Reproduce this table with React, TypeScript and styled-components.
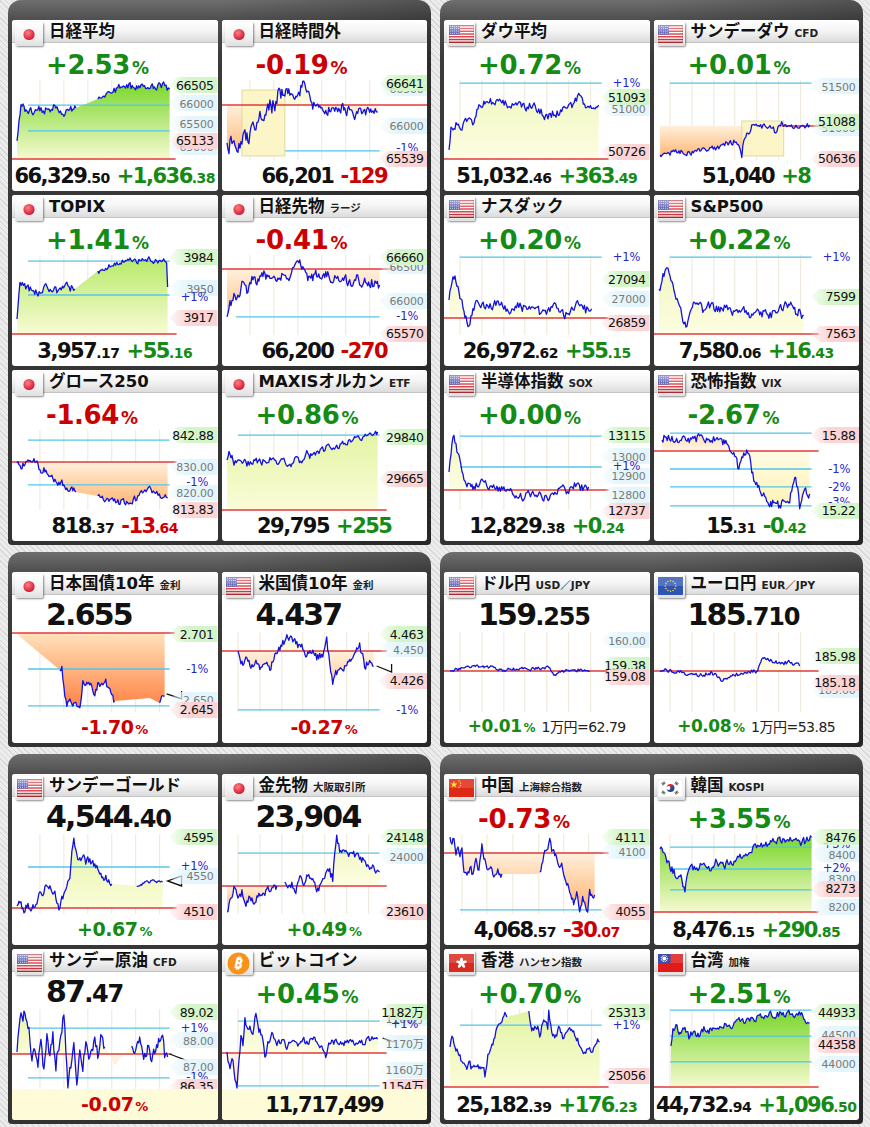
import React, { useId, useMemo } from 'react';
import styled, { createGlobalStyle } from 'styled-components';

type Col = 'g' | 'r' | 'k';
type FlagKind = 'jp' | 'us' | 'eu' | 'cn' | 'kr' | 'hk' | 'tw' | 'btc';
type Seg = { k: number[][]; n: number; h?: boolean };
type Lb = [number, string, 'a' | 'b' | 'h' | 'l'];

interface ChartSpec {
  p: number;
  px?: [number, number];
  segs: Seg[];
  cy?: number[];
  cx?: [number, number];
  lb: Lb[];
  box?: number[];
  mk?: string;
  up?: string[];
  dn?: string[];
  grid?: number[];
}

interface CardSpec {
  flag: FlagKind;
  title: string;
  sub?: string;
  pct?: [string, Col];
  lvl?: [string, string?];
  pair?: [string, string, Col];
  fpct?: [string, Col];
  note?: string;
  fpx?: string;
  yel?: boolean;
  ch: ChartSpec;
}

const COLORS: Record<Col, string> = { g: '#158a15', r: '#cc0000', k: '#111' };

const G3 = ['#f6fad0', '#76d626'];
const G2 = ['#f8fbd4', '#b4e963'];
const G1 = ['#fdfde2', '#eef6bc'];
const GY = ['#fbfcd8', '#e2f4a2'];
const O1 = ['#fff6e6', '#ffd7a4'];
const O2 = ['#fff0dc', '#ffb068'];
const O3 = ['#ffe2bc', '#ff7c3c'];
const Y1 = ['#fffbe6', '#fdf2b0'];

const JP = [28, 52, 76, 100, 124, 148];
const US = [16, 38, 60, 81, 103, 125, 147];
const CN = [18, 43, 69, 95, 120, 145];

const GlobalStyle = createGlobalStyle`
  html, body { margin: 0; padding: 0; }
  body {
    background-color: #e6e6e6;
    background-image: repeating-linear-gradient(45deg, #d8d8d8 0 1px, #ececec 1px 4px);
    font-family: 'DejaVu Sans', 'Noto Sans CJK JP', sans-serif;
  }
`;

const Page = styled.div`
  width: 870px;
  min-height: 1127px;
  box-sizing: border-box;
  padding: 0 0 0 8px;
  display: grid;
  grid-template-columns: 423px 423px;
  column-gap: 9px;
  row-gap: 7px;
  align-content: start;
`;

const Panel = styled.section`
  padding: 20px 4px 4px;
  border-radius: 13px 13px 4px 4px;
  background:
    linear-gradient(90deg, rgba(0, 0, 0, 0) 50%, rgba(0, 0, 0, 0.25) 100%),
    linear-gradient(180deg, #6e6e6e 0, #4e4e4e 20px, #3a3a3a 60px, #333 100%);
  display: grid;
  grid-template-columns: 1fr 1fr;
  gap: 4px;
  align-content: start;
`;

const Card = styled.article`
  height: 171px;
  background: #fff;
  border-radius: 3px;
  display: flex;
  flex-direction: column;
  overflow: hidden;
`;

const Header = styled.header`
  height: 23px;
  flex-shrink: 0;
  box-sizing: border-box;
  display: flex;
  align-items: flex-start;
  background: linear-gradient(180deg, #ffffff 0%, #f6f6f6 45%, #dcdcdc 100%);
  border-bottom: 1px solid #c4c4c4;
`;

const FlagTab = styled.div`
  position: relative;
  z-index: 1;
  width: 28px;
  height: 24px;
  margin: 2px 0 0 3px;
  flex-shrink: 0;
  display: flex;
  align-items: center;
  justify-content: center;
  border-radius: 2px;
  background: linear-gradient(180deg, #ffffff 0%, #f2f2f2 60%, #e0e0e0 100%);
  box-shadow: 1px 1px 2px rgba(0, 0, 0, 0.45);
`;

const Title = styled.h2`
  margin: 0 0 0 6px;
  font-size: 16.5px;
  line-height: 23px;
  font-weight: bold;
  color: #111;
  white-space: nowrap;
  font-family: 'DejaVu Sans', 'Noto Sans CJK JP', sans-serif;
`;

const Sub = styled.span`
  margin-left: 5px;
  font-size: 10.5px;
  font-weight: bold;
  color: #222;
`;

const Headline = styled.div`
  height: 37px;
  flex-shrink: 0;
  box-sizing: border-box;
  display: flex;
  align-items: flex-end;
  padding: 0 0 2px 34px;
`;

const LineText = styled.div`
  line-height: 1;
  white-space: nowrap;
`;

const Val = styled.span<{ $s: number; $c: string; $ls?: number }>`
  font-size: ${(p) => p.$s}px;
  color: ${(p) => p.$c};
  letter-spacing: ${(p) => p.$ls ?? 0}px;
  font-weight: bold;
`;

const PctSign = styled.span<{ $s: number; $c: string }>`
  font-size: ${(p) => p.$s}px;
  color: ${(p) => p.$c};
  font-weight: bold;
  margin-left: 2px;
`;

const Note = styled.span`
  font-size: 14px;
  letter-spacing: -0.5px;
  color: #222;
  margin-left: 6px;
`;

const Footer = styled.div<{ $yel?: boolean }>`
  flex: 1;
  box-sizing: border-box;
  padding-top: 6px;
  display: flex;
  justify-content: center;
  align-items: baseline;
  gap: 7px;
  line-height: 1;
  white-space: nowrap;
  background: ${(p) => (p.$yel ? '#fefbd8' : 'transparent')};
`;

const ChartSvg = styled.svg`
  display: block;
  flex-shrink: 0;
  overflow: visible;
  font-family: 'DejaVu Sans', 'Noto Sans CJK JP', sans-serif;
`;

function rng(seed: number) {
  let a = seed >>> 0;
  return () => {
    a = (a + 0x6d2b79f5) >>> 0;
    let t = a;
    t = Math.imul(t ^ (t >>> 15), t | 1);
    t ^= t + Math.imul(t ^ (t >>> 7), t | 61);
    return ((t ^ (t >>> 14)) >>> 0) / 4294967296;
  };
}

// keypoints are joined with a jittered line, hidden segments only shape the fill
function build(segs: Seg[], seed: number) {
  const r = rng(seed);
  const all: number[][] = [];
  const lines: string[] = [];
  for (const s of segs) {
    const pts: number[][] = [];
    if (s.h) {
      s.k.forEach((p) => pts.push([p[0], p[1]]));
    } else {
      let dev = 0;
      for (let i = 0; i < s.k.length - 1; i++) {
        const [x0, y0] = s.k[i];
        const [x1, y1] = s.k[i + 1];
        const steps = Math.max(1, Math.round((x1 - x0) / 1.1));
        for (let j = 0; j < steps; j++) {
          const t = j / steps;
          dev = dev * 0.3 + (r() - 0.5) * 2.6 * s.n;
          const y = Math.min(79, Math.max(1, y0 + (y1 - y0) * t + (i === 0 && j === 0 ? 0 : dev)));
          pts.push([x0 + (x1 - x0) * t, y]);
        }
      }
      const last = s.k[s.k.length - 1];
      pts.push([last[0], last[1]]);
      lines.push(pts.map((p) => `${p[0].toFixed(1)},${p[1].toFixed(1)}`).join(' '));
    }
    all.push(...pts);
  }
  return { all, lines };
}

const TAG: Record<string, string> = { h: '#d4f5ca', l: '#fbd5d5', a: '#e4f6fb' };

function Chart({ spec, seed }: { spec: ChartSpec; seed: number }) {
  const uid = useId().replace(/[^a-zA-Z0-9]/g, '');
  const { all, lines } = useMemo(() => build(spec.segs, seed), [spec, seed]);
  const p = spec.p;
  const fx0 = all[0][0];
  const fx1 = all[all.length - 1][0];
  const area =
    `M${fx0},${p} ` + all.map((q) => `L${q[0].toFixed(1)},${q[1].toFixed(1)}`).join(' ') + ` L${fx1},${p} Z`;
  const up = spec.up ?? G1;
  const dn = spec.dn ?? O1;
  const [px0, px1] = spec.px ?? [0, 165];
  const [cx0, cx1] = spec.cx ?? [16, 158];
  const order = { a: 0, b: 1, h: 2, l: 2 };
  const labels = [...spec.lb].sort((a, b) => order[a[2]] - order[b[2]]);

  return (
    <ChartSvg viewBox="0 0 206 80" width="100%" height="80">
      <defs>
        <linearGradient id={`u${uid}`} gradientUnits="userSpaceOnUse" x1="0" y1={p} x2="0" y2="0">
          <stop offset="0" stopColor={up[0]} />
          <stop offset="1" stopColor={up[1]} />
        </linearGradient>
        <linearGradient id={`d${uid}`} gradientUnits="userSpaceOnUse" x1="0" y1={p} x2="0" y2="80">
          <stop offset="0" stopColor={dn[0]} />
          <stop offset="1" stopColor={dn[1]} />
        </linearGradient>
        <clipPath id={`cu${uid}`}>
          <rect x="0" y="-10" width="206" height={p + 10} />
        </clipPath>
        <clipPath id={`cd${uid}`}>
          <rect x="0" y={p} width="206" height={95 - p} />
        </clipPath>
        {(['h', 'l', 'a'] as const).map((t) => (
          <linearGradient key={t} id={`t${t}${uid}`} gradientUnits="userSpaceOnUse" x1="157" y1="0" x2="176" y2="0">
            <stop offset="0" stopColor={TAG[t]} stopOpacity="0.15" />
            <stop offset="1" stopColor={TAG[t]} stopOpacity="1" />
          </linearGradient>
        ))}
      </defs>
      {(spec.grid ?? JP).map((x) => (
        <line key={x} x1={x} y1="0" x2={x} y2="80" stroke="#eee7d6" strokeWidth="1" />
      ))}
      <path d={area} fill={`url(#u${uid})`} clipPath={`url(#cu${uid})`} />
      <path d={area} fill={`url(#d${uid})`} clipPath={`url(#cd${uid})`} />
      {(spec.cy ?? []).map((y) => (
        <line key={y} x1={cx0} y1={y} x2={cx1} y2={y} stroke="#52c6e6" strokeWidth="1.3" />
      ))}
      {spec.box && (
        <rect
          x={spec.box[0]}
          y={spec.box[1]}
          width={spec.box[2] - spec.box[0]}
          height={spec.box[3] - spec.box[1]}
          fill="#fcf4c2"
          fillOpacity="0.92"
          stroke="#e2d99a"
          strokeWidth="1"
        />
      )}
      <line x1={px0} y1={p} x2={px1} y2={p} stroke="#e23a3a" strokeWidth="1.5" />
      {lines.map((l, i) => (
        <polyline key={i} points={l} fill="none" stroke="#1212dc" strokeWidth="1.3" strokeLinejoin="round" />
      ))}
      {spec.mk && <path d={spec.mk} fill="none" stroke="#111" strokeWidth="1.3" />}
      {labels.map(([y, t, k], i) =>
        k === 'b' ? (
          <text key={i} x="197" y={y + 4} textAnchor="end" fontSize="11.5" fill="#2626cc">
            {t}
          </text>
        ) : (
          <g key={i}>
            <path d={`M157,${y} L166,${y - 8} L206,${y - 8} L206,${y + 8} L166,${y + 8} Z`} fill={`url(#t${k}${uid})`} />
            <text
              x="202"
              y={y + 4.5}
              textAnchor="end"
              fontSize={k === 'a' ? 11 : 12.5}
              fill={k === 'a' ? '#7a7a7a' : '#111'}
              letterSpacing={k === 'a' ? -0.2 : -0.4}
            >
              {t}
            </text>
          </g>
        )
      )}
    </ChartSvg>
  );
}

function Flag({ f }: { f: FlagKind }) {
  switch (f) {
    case 'jp':
      return (
        <svg width="24" height="17" viewBox="0 0 24 17">
          <defs>
            <radialGradient id="jpdot" cx="0.4" cy="0.35" r="0.7">
              <stop offset="0" stopColor="#ff8080" />
              <stop offset="1" stopColor="#cc1030" />
            </radialGradient>
          </defs>
          <circle cx="12" cy="8.5" r="5.6" fill="url(#jpdot)" />
        </svg>
      );
    case 'us':
      return (
        <svg width="25" height="18" viewBox="0 0 25 18">
          <defs>
            <linearGradient id="gloss" x1="0" y1="0" x2="0" y2="1">
              <stop offset="0" stopColor="#fff" stopOpacity="0.5" />
              <stop offset="0.5" stopColor="#fff" stopOpacity="0.05" />
              <stop offset="1" stopColor="#000" stopOpacity="0.12" />
            </linearGradient>
          </defs>
          <rect width="25" height="18" fill="#fff" />
          {Array.from({ length: 7 }).map((_, i) => (
            <rect key={i} x="0" y={(i * 2 * 18) / 13} width="25" height={18 / 13} fill="#d8333a" />
          ))}
          <rect width="11" height="9.7" fill="#5a5fb4" />
          {Array.from({ length: 20 }).map((_, i) => (
            <circle key={i} cx={1.3 + (i % 5) * 2.1} cy={1.3 + Math.floor(i / 5) * 2.3} r="0.5" fill="#e8e8ff" />
          ))}
          <rect width="25" height="18" fill="url(#gloss)" />
          <rect x="0.25" y="0.25" width="24.5" height="17.5" fill="none" stroke="rgba(0,0,0,0.25)" strokeWidth="0.5" />
        </svg>
      );
    case 'eu':
      return (
        <svg width="25" height="18" viewBox="0 0 25 18">
          <rect width="25" height="18" fill="#2f55b4" />
          {Array.from({ length: 12 }).map((_, i) => (
            <circle
              key={i}
              cx={12.5 + 5.2 * Math.cos((i * Math.PI) / 6)}
              cy={9 + 5.2 * Math.sin((i * Math.PI) / 6)}
              r="0.8"
              fill="#f2d23a"
            />
          ))}
          <rect width="25" height="9" fill="#fff" fillOpacity="0.18" />
        </svg>
      );
    case 'cn':
      return (
        <svg width="25" height="18" viewBox="0 0 25 18">
          <rect width="25" height="18" fill="#de2a14" />
          <polygon points="5,1.8 5.9,4.4 8.6,4.4 6.4,6 7.2,8.6 5,7 2.8,8.6 3.6,6 1.4,4.4 4.1,4.4" fill="#ffde00" />
          {[
            [10, 2],
            [11.5, 4],
            [11.5, 6.6],
            [10, 8.4],
          ].map(([x, y], i) => (
            <circle key={i} cx={x} cy={y} r="0.75" fill="#ffde00" />
          ))}
          <rect width="25" height="9" fill="#fff" fillOpacity="0.15" />
        </svg>
      );
    case 'kr':
      return (
        <svg width="25" height="18" viewBox="0 0 25 18">
          <rect width="25" height="18" fill="#fff" stroke="#ccc" strokeWidth="0.5" />
          <path d="M8.6 9 A3.9 3.9 0 0 1 16.4 9 A1.95 1.95 0 0 1 12.5 9 A1.95 1.95 0 0 0 8.6 9 Z" fill="#d6303c" />
          <path d="M8.6 9 A3.9 3.9 0 0 0 16.4 9 A1.95 1.95 0 0 0 12.5 9 A1.95 1.95 0 0 1 8.6 9 Z" fill="#1e4da0" />
          <g stroke="#222" strokeWidth="0.8">
            <path d="M3.5 5 L6 2.5 M4.2 5.7 L6.7 3.2 M4.9 6.4 L7.4 3.9" />
            <path d="M18 2.5 L20.5 5 M17.3 3.2 L19.8 5.7 M16.6 3.9 L19.1 6.4" />
            <path d="M3.5 13 L6 15.5 M4.2 12.3 L6.7 14.8 M4.9 11.6 L7.4 14.1" />
            <path d="M18 15.5 L20.5 13 M17.3 14.8 L19.8 12.3 M16.6 14.1 L19.1 11.6" />
          </g>
        </svg>
      );
    case 'hk':
      return (
        <svg width="25" height="18" viewBox="0 0 25 18">
          <rect width="25" height="18" fill="#d92a20" />
          {Array.from({ length: 5 }).map((_, i) => (
            <ellipse key={i} cx="12.5" cy="6.2" rx="1.5" ry="2.8" fill="#fff" transform={`rotate(${i * 72} 12.5 9)`} />
          ))}
          <rect width="25" height="9" fill="#fff" fillOpacity="0.15" />
        </svg>
      );
    case 'tw':
      return (
        <svg width="25" height="18" viewBox="0 0 25 18">
          <rect width="25" height="18" fill="#e01b1b" />
          <rect width="12.5" height="9" fill="#1b2f9c" />
          <circle cx="6.25" cy="4.5" r="3" fill="none" stroke="#fff" strokeWidth="1.1" strokeDasharray="0.9 0.7" />
          <circle cx="6.25" cy="4.5" r="1.9" fill="#fff" />
          <rect width="25" height="9" fill="#fff" fillOpacity="0.15" />
        </svg>
      );
    case 'btc':
      return (
        <svg width="23" height="23" viewBox="0 0 23 23">
          <circle cx="11.5" cy="11.5" r="11" fill="#f7931a" />
          <text
            x="11.5"
            y="16.5"
            textAnchor="middle"
            fontSize="15"
            fontWeight="bold"
            fill="#fff"
            fontFamily="'DejaVu Sans', 'Noto Sans', sans-serif"
            transform="rotate(12 11.5 11.5)"
          >
            ₿
          </text>
        </svg>
      );
  }
}

function Price({ v, c, s, ss, ls }: { v: string; c: string; s: number; ss: number; ls: number }) {
  const i = v.indexOf('.');
  if (i < 0)
    return (
      <Val $s={s} $c={c} $ls={ls}>
        {v}
      </Val>
    );
  return (
    <span>
      <Val $s={s} $c={c} $ls={ls}>
        {v.slice(0, i)}
      </Val>
      <Val $s={ss} $c={c} $ls={-0.5}>
        {v.slice(i)}
      </Val>
    </span>
  );
}

function MarketCard({ d, seed }: { d: CardSpec; seed: number }) {
  return (
    <Card>
      <Header>
        <FlagTab>
          <Flag f={d.flag} />
        </FlagTab>
        <Title>
          {d.title}
          {d.sub && <Sub>{d.sub}</Sub>}
        </Title>
      </Header>
      <Headline>
        <LineText>
          {d.pct && (
            <>
              <Val $s={26} $c={COLORS[d.pct[1]]} $ls={-0.4}>
                {d.pct[0]}
              </Val>
              <PctSign $s={17} $c={COLORS[d.pct[1]]}>
                %
              </PctSign>
            </>
          )}
          {d.lvl && (
            <>
              <Val $s={30} $c={COLORS.k} $ls={-1.8}>
                {d.lvl[0]}
              </Val>
              {d.lvl[1] && (
                <Val $s={24} $c={COLORS.k} $ls={-1.2}>
                  {d.lvl[1]}
                </Val>
              )}
            </>
          )}
        </LineText>
      </Headline>
      <Chart spec={d.ch} seed={seed} />
      <Footer $yel={d.yel}>
        {d.pair && (
          <>
            <Price v={d.pair[0]} c={COLORS.k} s={21} ss={14} ls={-1.5} />
            <Price v={d.pair[1]} c={COLORS[d.pair[2]]} s={21} ss={14} ls={-1.5} />
          </>
        )}
        {d.fpct && (
          <LineText>
            <Val $s={d.note ? 17 : 19} $c={COLORS[d.fpct[1]]} $ls={-0.5}>
              {d.fpct[0]}
            </Val>
            <PctSign $s={d.note ? 12 : 13} $c={COLORS[d.fpct[1]]}>
              %
            </PctSign>
            {d.note && <Note>{d.note}</Note>}
          </LineText>
        )}
        {d.fpx && (
          <Val $s={21} $c={COLORS.k} $ls={-1.5}>
            {d.fpx}
          </Val>
        )}
      </Footer>
    </Card>
  );
}

const panels: CardSpec[][] = [
  [
    {
      flag: 'jp',
      title: '日経平均',
      pct: ['+2.53', 'g'],
      pair: ['66,329.50', '+1,636.38', 'g'],
      ch: {
        p: 79,
        px: [0, 164],
        up: G3,
        segs: [
          { k: [[5, 61], [7, 40], [9, 24], [14, 30], [20, 32], [28, 28], [36, 31], [44, 27], [52, 32], [60, 29], [64, 28]], n: 3 },
          { k: [[64, 28], [86, 19]], n: 0, h: true },
          { k: [[86, 19], [92, 17], [100, 13], [106, 8], [115, 6], [125, 7], [135, 6], [145, 7], [152, 5], [158, 9]], n: 2.5 },
        ],
        cy: [25, 51],
        lb: [[23, '66000', 'a'], [44, '65500', 'a'], [67, '65000', 'a'], [5, '66505', 'h'], [61, '65133', 'l']],
      },
    },
    {
      flag: 'jp',
      title: '日経時間外',
      pct: ['-0.19', 'r'],
      pair: ['66,201', '-129', 'r'],
      ch: {
        p: 25,
        px: [0, 206],
        dn: O2,
        segs: [
          { k: [[5, 63], [10, 66], [15, 70], [20, 62], [25, 55], [30, 48], [35, 42], [40, 35], [45, 28], [50, 24], [55, 20], [60, 14], [65, 8]], n: 7 },
          { k: [[65, 8], [70, 15], [75, 20], [78, 12], [81, 3], [85, 15], [90, 24], [95, 28], [100, 22], [105, 30], [110, 26], [115, 32], [120, 28], [125, 34], [130, 30], [135, 36], [140, 32], [145, 30], [150, 33], [156, 32]], n: 4 },
        ],
        box: [20, 10, 63, 76],
        cy: [71],
        cx: [63, 158],
        lb: [[8, '66500', 'a'], [46, '66000', 'a'], [68, '-1%', 'b'], [3, '66641', 'h'], [79, '65539', 'l']],
      },
    },
    {
      flag: 'jp',
      title: 'TOPIX',
      pct: ['+1.41', 'g'],
      pair: ['3,957.17', '+55.16', 'g'],
      ch: {
        p: 79,
        up: G2,
        segs: [
          { k: [[5, 64], [8, 30], [15, 34], [25, 38], [35, 33], [45, 36], [55, 32], [63, 34]], n: 3 },
          { k: [[63, 34], [86, 16]], n: 0, h: true },
          { k: [[86, 16], [95, 12], [105, 8], [115, 5], [125, 6], [135, 4], [145, 6], [152, 4], [155, 8], [156, 32]], n: 2 },
        ],
        cy: [6, 40],
        lb: [[33, '3950', 'a'], [42, '+1%', 'b'], [2, '3984', 'h'], [63, '3917', 'l']],
      },
    },
    {
      flag: 'jp',
      title: '日経先物',
      sub: 'ラージ',
      pct: ['-0.41', 'r'],
      pair: ['66,200', '-270', 'r'],
      ch: {
        p: 14,
        px: [0, 206],
        dn: O2,
        segs: [
          { k: [[5, 62], [8, 50], [12, 40], [16, 45], [20, 30], [25, 35], [30, 22], [35, 28], [40, 18], [45, 24], [50, 20], [55, 25], [60, 18], [66, 22], [72, 15], [76, 3], [80, 15], [85, 20], [90, 24], [95, 18], [100, 25], [105, 20], [110, 26], [115, 22], [120, 28], [125, 24], [130, 27], [135, 24], [140, 30], [145, 26], [150, 28], [158, 30]], n: 4 },
        ],
        cy: [62],
        cx: [14, 158],
        lb: [[11, '66500', 'a'], [46, '66000', 'a'], [61, '-1%', 'b'], [2, '66660', 'h'], [79, '65570', 'l']],
      },
    },
    {
      flag: 'jp',
      title: 'グロース250',
      pct: ['-1.64', 'r'],
      pair: ['818.37', '-13.64', 'r'],
      ch: {
        p: 32,
        dn: O2,
        segs: [
          { k: [[5, 33], [10, 36], [15, 30], [20, 34], [25, 30], [28, 42], [32, 38], [36, 48], [40, 44], [45, 55], [50, 52], [55, 60], [60, 58], [64, 62]], n: 2.5 },
          { k: [[64, 62], [86, 66]], n: 0, h: true },
          { k: [[86, 66], [95, 70], [105, 73], [115, 72], [125, 68], [132, 62], [138, 58], [144, 64], [150, 66], [156, 68]], n: 2.5 },
        ],
        cy: [10, 55],
        lb: [[37, '830.00', 'a'], [52, '-1%', 'b'], [63, '820.00', 'a'], [5, '842.88', 'h'], [80, '813.83', 'l']],
      },
    },
    {
      flag: 'jp',
      title: 'MAXISオルカン',
      sub: 'ETF',
      pct: ['+0.86', 'g'],
      pair: ['29,795', '+255', 'g'],
      ch: {
        p: 80,
        up: GY,
        segs: [
          { k: [[5, 30], [8, 22], [12, 32], [18, 28], [25, 34], [32, 30], [40, 33], [48, 28], [55, 32], [62, 30], [68, 35], [74, 30], [80, 32], [85, 24], [90, 26], [96, 22], [102, 20], [108, 16], [115, 18], [122, 12], [128, 10], [134, 8], [140, 10], [146, 5], [152, 8], [156, 2]], n: 2.5 },
        ],
        cy: [5],
        lb: [[7, '29840', 'h'], [49, '29665', 'l']],
      },
    },
  ],
  [
    {
      flag: 'us',
      title: 'ダウ平均',
      pct: ['+0.72', 'g'],
      pair: ['51,032.46', '+363.49', 'g'],
      ch: {
        p: 79,
        grid: US,
        segs: [
          { k: [[5, 70], [7, 50], [12, 45], [18, 48], [24, 40], [30, 42], [33, 30], [38, 25], [43, 18], [50, 22], [58, 20], [66, 26], [72, 20], [80, 28], [88, 25], [95, 30], [103, 38], [110, 33], [118, 32], [126, 28], [135, 17], [142, 24], [148, 25], [155, 25]], n: 3 },
        ],
        cy: [3],
        lb: [[28, '51000', 'a'], [3, '+1%', 'b'], [17, '51093', 'h'], [72, '50726', 'l']],
      },
    },
    {
      flag: 'us',
      title: 'サンデーダウ',
      sub: 'CFD',
      pct: ['+0.01', 'g'],
      pair: ['51,040', '+8', 'g'],
      ch: {
        p: 46,
        px: [128, 206],
        grid: US,
        dn: O2,
        segs: [
          { k: [[6, 75], [15, 73], [25, 72], [35, 73], [45, 71], [55, 70], [65, 67], [72, 64], [80, 62], [86, 66], [88, 76], [90, 60], [95, 52], [100, 43], [108, 48], [115, 45], [122, 52], [128, 42], [133, 47], [140, 47], [148, 47], [156, 45]], n: 2 },
        ],
        box: [88, 41, 130, 76],
        cy: [3],
        lb: [[6, '51500', 'a'], [48, '51000', 'a'], [42, '51088', 'h'], [79, '50636', 'l']],
      },
    },
    {
      flag: 'us',
      title: 'ナスダック',
      pct: ['+0.20', 'g'],
      pair: ['26,972.62', '+55.15', 'g'],
      ch: {
        p: 63,
        grid: US,
        segs: [
          { k: [[5, 45], [8, 28], [11, 22], [15, 40], [20, 55], [25, 70], [28, 60], [32, 45], [38, 50], [45, 55], [52, 48], [60, 52], [68, 58], [75, 50], [82, 55], [90, 52], [98, 60], [105, 55], [112, 52], [120, 60], [128, 55], [135, 48], [142, 55], [148, 54]], n: 3.5 },
        ],
        cy: [2],
        lb: [[44, '27000', 'a'], [2, '+1%', 'b'], [24, '27094', 'h'], [68, '26859', 'l']],
      },
    },
    {
      flag: 'us',
      title: 'S&P500',
      pct: ['+0.22', 'g'],
      pair: ['7,580.06', '+16.43', 'g'],
      ch: {
        p: 79,
        grid: US,
        segs: [
          { k: [[5, 34], [9, 20], [13, 15], [18, 25], [22, 40], [28, 60], [32, 73], [36, 55], [42, 48], [50, 55], [58, 50], [66, 56], [74, 52], [82, 58], [90, 54], [98, 60], [106, 56], [114, 62], [120, 58], [128, 54], [135, 48], [140, 55], [145, 58], [150, 60]], n: 3.5 },
        ],
        cy: [2],
        lb: [[2, '+1%', 'b'], [42, '7599', 'h'], [79, '7563', 'l']],
      },
    },
    {
      flag: 'us',
      title: '半導体指数',
      sub: 'SOX',
      pct: ['+0.00', 'g'],
      pair: ['12,829.38', '+0.24', 'g'],
      ch: {
        p: 60,
        grid: US,
        segs: [
          { k: [[5, 42], [8, 15], [10, 8], [13, 20], [16, 30], [20, 48], [25, 55], [30, 58], [38, 52], [45, 56], [52, 60], [60, 58], [70, 64], [80, 68], [90, 62], [100, 68], [110, 65], [118, 58], [125, 62], [132, 55], [138, 58], [145, 57]], n: 3 },
        ],
        cy: [6, 37],
        lb: [[26, '13000', 'a'], [46, '12900', 'a'], [65, '12800', 'a'], [36, '+1%', 'b'], [5, '13115', 'h'], [81, '12737', 'l']],
      },
    },
    {
      flag: 'us',
      title: '恐怖指数',
      sub: 'VIX',
      pct: ['-2.67', 'g'],
      pair: ['15.31', '-0.42', 'g'],
      ch: {
        p: 21,
        grid: [80],
        up: O1,
        dn: Y1,
        segs: [
          { k: [[8, 10], [12, 6], [18, 9], [25, 11], [32, 8], [40, 10], [48, 7], [55, 10], [62, 9], [68, 12], [71, 11], [74, 18], [78, 23], [82, 26], [85, 40], [88, 30], [91, 25], [93, 17], [96, 30], [100, 50], [104, 57], [108, 63], [112, 66], [116, 75], [120, 72], [125, 76], [130, 72], [135, 75], [138, 60], [141, 45], [144, 60], [146, 77], [149, 68], [151, 60], [154, 66], [156, 64]], n: 3 },
        ],
        cy: [3, 39, 57, 76],
        lb: [[72, '-3%', 'b'], [39, '-1%', 'b'], [57, '-2%', 'b'], [5, '15.88', 'l'], [81, '15.22', 'h']],
      },
    },
  ],
  [
    {
      flag: 'jp',
      title: '日本国債10年',
      sub: '金利',
      lvl: ['2.655'],
      fpct: ['-1.70', 'r'],
      ch: {
        p: 1,
        px: [0, 163],
        dn: O3,
        segs: [
          { k: [[6, 3], [48, 38]], n: 0, h: true },
          { k: [[48, 38], [50, 35], [52, 55], [55, 78], [57, 66], [60, 70], [64, 75], [68, 78], [71, 49], [74, 55], [77, 50], [80, 56], [83, 62], [86, 52], [90, 55], [94, 50], [97, 58], [100, 65], [103, 69]], n: 3 },
          { k: [[103, 69], [138, 66], [148, 71]], n: 0, h: true },
          { k: [[148, 71], [150, 63], [153, 64]], n: 1 },
        ],
        cy: [37, 74],
        lb: [[68, '2.650', 'a'], [37, '-1%', 'b'], [2, '2.701', 'h'], [78, '2.645', 'l']],
        mk: 'M155 62 L170 67 L170 59',
      },
    },
    {
      flag: 'us',
      title: '米国債10年',
      sub: '金利',
      lvl: ['4.437'],
      fpct: ['-0.27', 'r'],
      ch: {
        p: 19,
        dn: O2,
        grid: US,
        segs: [
          { k: [[16, 19], [18, 24], [21, 35], [25, 28], [29, 33], [33, 30], [38, 34], [43, 32], [48, 36], [52, 28], [55, 21], [58, 18], [62, 10], [66, 3], [70, 8], [75, 13], [80, 16], [85, 22], [90, 20], [95, 26], [100, 24], [103, 20], [105, 9], [108, 30], [111, 49], [115, 40], [121, 36], [126, 28], [131, 23], [135, 18], [138, 14], [141, 25], [143, 36], [147, 30], [150, 31], [152, 34]], n: 3 },
        ],
        cy: [78],
        lb: [[17, '4.450', 'a'], [78, '-1%', 'b'], [2, '4.463', 'h'], [49, '4.426', 'l']],
        mk: 'M155 34 L170 40 L170 32',
      },
    },
  ],
  [
    {
      flag: 'us',
      title: 'ドル円',
      sub: 'USD／JPY',
      lvl: ['159', '.255'],
      fpct: ['+0.01', 'g'],
      note: '1万円=62.79',
      ch: {
        p: 39,
        grid: US,
        segs: [
          { k: [[6, 39], [15, 37], [25, 36], [38, 34], [50, 36], [60, 38], [75, 37], [90, 37], [100, 36], [105, 34], [108, 40], [110, 44], [114, 40], [120, 39], [130, 38], [140, 38], [146, 39]], n: 1.2 },
        ],
        lb: [[8, '160.00', 'a'], [33, '159.38', 'h'], [45, '159.08', 'l']],
      },
    },
    {
      flag: 'eu',
      title: 'ユーロ円',
      sub: 'EUR／JPY',
      lvl: ['185', '.710'],
      fpct: ['+0.08', 'g'],
      note: '1万円=53.85',
      ch: {
        p: 39,
        grid: US,
        segs: [
          { k: [[6, 39], [12, 38], [20, 39], [30, 41], [40, 42], [50, 43], [55, 40], [60, 42], [65, 47], [68, 51], [72, 46], [78, 43], [85, 42], [92, 41], [100, 39], [103, 39], [106, 33], [110, 26], [115, 28], [120, 30], [128, 31], [135, 30], [140, 32], [146, 34]], n: 1.5 },
        ],
        lb: [[58, '185.00', 'a'], [24, '185.98', 'h'], [51, '185.18', 'l']],
      },
    },
  ],
  [
    {
      flag: 'us',
      title: 'サンデーゴールド',
      lvl: ['4,544', '.40'],
      fpct: ['+0.67', 'g'],
      ch: {
        p: 74,
        up: GY,
        segs: [
          { k: [[5, 72], [8, 68], [12, 76], [16, 70], [20, 78], [24, 66], [28, 62], [32, 56], [35, 50], [40, 56], [44, 62], [46, 68], [47, 74], [50, 62], [54, 60], [58, 42], [60, 20], [62, 2], [64, 15], [67, 25], [70, 22], [74, 28], [78, 26], [82, 32], [86, 35], [90, 40], [95, 45], [100, 50]], n: 3 },
          { k: [[100, 50], [125, 52]], n: 0, h: true },
          { k: [[125, 52], [130, 50], [135, 48], [140, 47], [145, 48], [151, 48]], n: 1 },
        ],
        cy: [33],
        lb: [[42, '4550', 'a'], [32, '+1%', 'b'], [3, '4595', 'h'], [78, '4510', 'l']],
        mk: 'M170 42 L156 47 L170 52 Z',
      },
    },
    {
      flag: 'jp',
      title: '金先物',
      sub: '大阪取引所',
      lvl: ['23,904'],
      fpct: ['+0.49', 'g'],
      ch: {
        p: 52,
        grid: US,
        dn: O2,
        segs: [
          { k: [[5, 78], [8, 68], [12, 55], [16, 62], [20, 58], [24, 68], [28, 62], [32, 70], [36, 60], [40, 62], [45, 56], [50, 54], [55, 52]], n: 3 },
          { k: [[55, 52], [63, 48]], n: 0, h: true },
          { k: [[63, 48], [66, 55], [70, 50], [74, 58], [78, 45], [82, 50], [86, 40], [90, 48], [94, 52], [97, 57], [100, 50], [104, 42], [108, 38], [111, 45], [113, 20], [115, 2], [118, 15], [122, 20], [126, 18], [130, 22], [134, 20], [138, 24], [142, 26], [146, 30], [150, 34], [154, 36], [158, 38]], n: 3 },
        ],
        cy: [19],
        lb: [[22, '24000', 'a'], [3, '24148', 'h'], [78, '23610', 'l']],
      },
    },
    {
      flag: 'us',
      title: 'サンデー原油',
      sub: 'CFD',
      lvl: ['87', '.47'],
      fpct: ['-0.07', 'r'],
      yel: true,
      ch: {
        p: 45,
        px: [0, 160],
        up: GY,
        segs: [
          { k: [[5, 43], [7, 20], [9, 2], [11, 8], [13, 2], [15, 15], [17, 25], [19, 45], [20, 57], [23, 40], [26, 55], [29, 35], [32, 62], [35, 30], [38, 50], [41, 28], [44, 58], [47, 35], [50, 20], [52, 5], [54, 40], [56, 78], [59, 55], [62, 35], [65, 70], [68, 45], [71, 60], [74, 30], [77, 50], [80, 40], [83, 28], [86, 45], [89, 30], [93, 38]], n: 5 },
          { k: [[93, 38], [103, 56], [118, 38]], n: 0, h: true },
          { k: [[120, 37], [124, 45], [128, 33], [132, 48], [136, 40], [140, 52], [144, 38], [148, 30], [151, 25], [153, 48], [156, 48]], n: 4 },
        ],
        cy: [19, 69],
        lb: [[31, '88.00', 'a'], [58, '87.00', 'a'], [68, '-1%', 'b'], [19, '+1%', 'b'], [3, '89.02', 'h'], [78, '86.35', 'l']],
        mk: 'M158 45 L176 52',
      },
    },
    {
      flag: 'btc',
      title: 'ビットコイン',
      pct: ['+0.45', 'g'],
      fpx: '11,717,499',
      yel: true,
      ch: {
        p: 44,
        grid: US,
        segs: [
          { k: [[5, 43], [8, 60], [11, 50], [13, 70], [15, 78], [17, 55], [19, 27], [21, 35], [23, 8], [25, 20], [28, 15], [31, 25], [34, 2], [37, 20], [40, 25], [43, 48], [46, 35], [50, 27], [55, 35], [60, 30], [65, 38], [70, 32], [75, 36], [80, 30], [85, 34], [90, 28], [95, 32], [100, 38], [104, 48], [107, 36], [112, 33], [120, 35], [130, 33], [140, 34], [148, 31], [154, 29], [156, 30]], n: 2.5 },
        ],
        cy: [12, 77],
        lb: [[9, '1180万', 'a'], [34, '1170万', 'a'], [61, '1160万', 'a'], [15, '+1%', 'b'], [3, '1182万', 'h'], [78, '1154万', 'l']],
        mk: 'M161 29 L176 34 L176 26',
      },
    },
  ],
  [
    {
      flag: 'cn',
      title: '中国',
      sub: '上海綜合指数',
      pct: ['-0.73', 'r'],
      pair: ['4,068.57', '-30.07', 'r'],
      ch: {
        p: 19,
        grid: CN,
        dn: O2,
        segs: [
          { k: [[6, 3], [8, 10], [10, 5], [12, 18], [14, 10], [16, 22], [18, 15], [20, 35], [23, 45], [26, 32], [29, 40], [32, 28], [35, 35], [38, 13], [41, 25], [44, 38], [47, 30], [50, 42], [53, 35], [56, 42], [58, 40]], n: 3 },
          { k: [[58, 40], [96, 40]], n: 0, h: true },
          { k: [[96, 38], [99, 25], [102, 15], [106, 8], [109, 18], [112, 22], [115, 30], [118, 28], [121, 40], [124, 52], [127, 60], [130, 70], [133, 58], [136, 78], [139, 62], [142, 70], [144, 78], [146, 58], [148, 60], [151, 61]], n: 3 },
        ],
        cy: [76],
        lb: [[17, '4100', 'a'], [3, '4111', 'h'], [78, '4055', 'l']],
      },
    },
    {
      flag: 'kr',
      title: '韓国',
      sub: 'KOSPI',
      pct: ['+3.55', 'g'],
      pair: ['8,476.15', '+290.85', 'g'],
      ch: {
        p: 78,
        up: G3,
        grid: US,
        segs: [
          { k: [[6, 15], [9, 20], [12, 25], [16, 32], [20, 38], [24, 42], [28, 46], [31, 55], [34, 38], [38, 32], [44, 35], [50, 30], [56, 34], [62, 28], [68, 33], [72, 30], [78, 28], [85, 24], [92, 20], [98, 16], [104, 14], [111, 10], [118, 8], [124, 7], [128, 5], [134, 8], [140, 6], [146, 9], [151, 7], [158, 3]], n: 3 },
        ],
        cy: [13, 35, 56],
        lb: [[10, '+3%', 'b'], [20, '8400', 'a'], [45, '8300', 'a'], [73, '8200', 'a'], [34, '+2%', 'b'], [3, '8476', 'h'], [55, '8273', 'l']],
      },
    },
    {
      flag: 'hk',
      title: '香港',
      sub: 'ハンセン指数',
      pct: ['+0.70', 'g'],
      pair: ['25,182.39', '+176.23', 'g'],
      ch: {
        p: 78,
        up: GY,
        segs: [
          { k: [[6, 38], [8, 27], [11, 40], [14, 45], [18, 52], [21, 60], [25, 55], [29, 62], [33, 58], [37, 62], [40, 56], [41, 65], [44, 45], [48, 37], [52, 25], [55, 13], [58, 8], [60, 2], [63, 8]], n: 3 },
          { k: [[63, 8], [85, 2]], n: 0, h: true },
          { k: [[85, 2], [88, 22], [92, 15], [96, 25], [100, 12], [104, 20], [105, 2], [108, 22], [112, 28], [116, 20], [120, 30], [124, 18], [128, 22], [131, 25], [135, 33], [141, 43], [145, 40], [148, 45], [152, 35], [155, 30], [156, 33]], n: 3 },
        ],
        cy: [16],
        lb: [[16, '+1%', 'b'], [3, '25313', 'h'], [67, '25056', 'l']],
      },
    },
    {
      flag: 'tw',
      title: '台湾',
      sub: '加権',
      pct: ['+2.51', 'g'],
      pair: ['44,732.94', '+1,096.50', 'g'],
      ch: {
        p: 78,
        up: G3,
        grid: US,
        segs: [
          { k: [[17, 37], [19, 22], [22, 18], [26, 25], [30, 20], [35, 28], [40, 22], [45, 26], [50, 20], [55, 22], [60, 18], [66, 20], [72, 15], [78, 17], [84, 12], [90, 13], [96, 10], [102, 9], [110, 7], [118, 6], [126, 5], [134, 4], [142, 6], [148, 4], [152, 10], [156, 14]], n: 2.5 },
        ],
        cy: [1, 27, 53],
        lb: [[25, '44500', 'a'], [55, '44000', 'a'], [3, '44933', 'h'], [36, '44358', 'l']],
      },
    },
  ],
];

export default function App() {
  let n = 0;
  return (
    <>
      <GlobalStyle />
      <Page>
        {panels.map((cards, i) => (
          <Panel key={i}>
            {cards.map((c) => {
              n += 1;
              return <MarketCard key={c.title} d={c} seed={n * 977 + 31} />;
            })}
          </Panel>
        ))}
      </Page>
    </>
  );
}
